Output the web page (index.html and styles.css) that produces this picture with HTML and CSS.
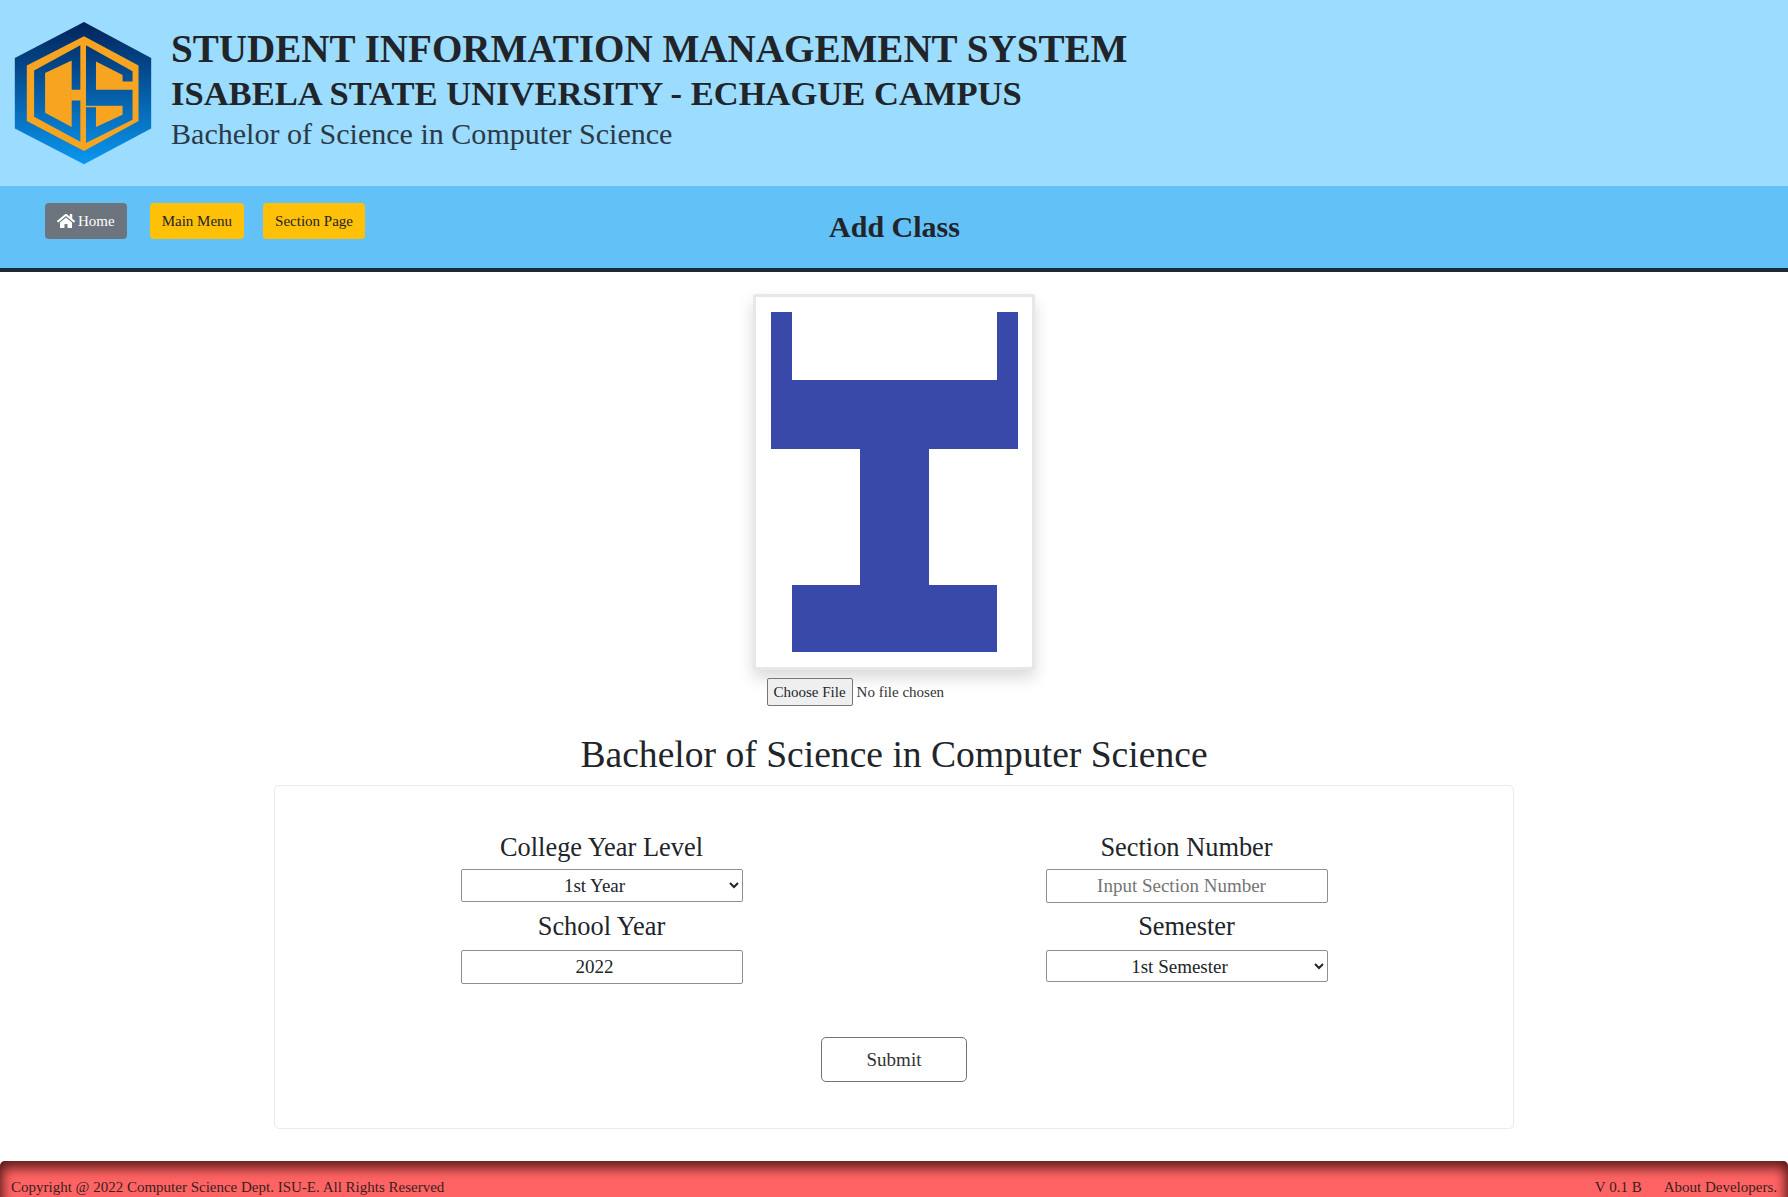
FILE: index.html
```html
<!DOCTYPE html>
<html lang="en">
<head>
<meta charset="utf-8">
<title>Add Class</title>
<link rel="stylesheet" href="styles.css">
</head>
<body>
<header class="banner">
  <svg class="logo" viewBox="12 12 414 430" aria-label="CS logo">
    <defs>
      <linearGradient id="inner" gradientUnits="userSpaceOnUse" x1="0" y1="12" x2="0" y2="440">
        <stop offset="0" stop-color="#02235a"/>
        <stop offset="1" stop-color="#0a97f0"/>
      </linearGradient>
    </defs>
    <path fill="url(#inner)" d="M222 12 424 120V332L222 440 14 332V120Z"/>
    <path fill="#f7a521" d="M222 55 386 143V310L222 400 50 310V143Z"/>
    <path fill="url(#inner)" d="M211 82 72 158V297L211 372V248H185V328L105 285V165L185 128V216H211Z"/>
    <path fill="url(#inner)" d="M228 82 368 160V191H338V171L258 131V216H368V306L228 376V268H258V328L338 291V264H228Z"/>
  </svg>
  <div class="titles">
    <h1 class="t-main">STUDENT INFORMATION MANAGEMENT SYSTEM</h1>
    <h2 class="t-uni">ISABELA STATE UNIVERSITY - ECHAGUE CAMPUS</h2>
    <p class="t-course">Bachelor of Science in Computer Science</p>
  </div>
</header>

<nav class="navbar">
  <div class="nav-btns">
    <a class="btn btn-grey">
      <svg class="home-ic" viewBox="0 0 576 512"><path fill="#fff" d="M280.400 148.300 96 300.100V464a16 16 0 0 0 16 16l112-.3a16 16 0 0 0 15.900-16V368a16 16 0 0 1 16-16h64a16 16 0 0 1 16 16v95.600a16 16 0 0 0 16 16.100l112 .3a16 16 0 0 0 16-16V300L295.700 148.300a12.200 12.200 0 0 0-15.300 0ZM571.600 251.500 488 182.600V44a12 12 0 0 0-12-12h-56a12 12 0 0 0-12 12v72.600L318.500 43a48 48 0 0 0-61 0L4.300 251.500a12 12 0 0 0-1.600 16.900l25.500 31A12 12 0 0 0 45.200 301l235.200-193.700a12.200 12.200 0 0 1 15.300 0L530.900 301a12 12 0 0 0 16.900-1.600l25.500-31a12 12 0 0 0-1.700-16.900Z"/></svg>
      Home
    </a>
    <a class="btn btn-yellow">Main Menu</a>
    <a class="btn btn-yellow">Section Page</a>
  </div>
  <div class="nav-title">Add Class</div>
  <div></div>
</nav>

<main class="content">
  <div class="photo">
    <svg class="photo-img" viewBox="0 0 247 340">
      <path fill="#3949a9" d="M0 0H21V68H226V0H247V137H158V273H226V340H21V273H89V137H0Z"/>
    </svg>
  </div>
  <input class="file" type="file">
  <h3 class="course">Bachelor of Science in Computer Science</h3>
  <form class="card">
    <div class="grid">
      <div class="col">
        <label class="lbl">College Year Level</label>
        <select class="field sel"><option>1st Year</option></select>
        <label class="lbl lbl2">School Year</label>
        <input class="field inp inp-y" type="text" value="2022">
      </div>
      <div class="col">
        <label class="lbl">Section Number</label>
        <input class="field inp" type="text" placeholder="Input Section Number">
        <label class="lbl lbl2b">Semester</label>
        <select class="field sel sel-s"><option>1st Semester</option></select>
      </div>
    </div>
    <button class="submit" type="button">Submit</button>
  </form>
</main>

<footer class="foot">
  <span>Copyright @ 2022 Computer Science Dept. ISU-E. All Rights Reserved</span>
  <span class="foot-right"><span>V 0.1 B</span><span>About Developers.</span></span>
</footer>
</body>
</html>
```
FILE: styles.css
```css
* { box-sizing: border-box; }
html, body { margin: 0; height: 1197px; overflow: hidden; }
body { font-family: "Liberation Serif", "Times New Roman", serif; color: #212529; background: #fff; }

.banner { height: 186px; background: #9bdcff; display: flex; align-items: flex-start; padding: 22px 0 0 14px; gap: 19px; }
.logo { width: 138px; height: 143px; flex: none; }
.titles { padding-top: 3px; }
.t-main { margin: 0; font-size: 39.1px; line-height: 48px; font-weight: 700; }
.t-uni { margin: 0; font-size: 34.55px; line-height: 41px; font-weight: 700; }
.t-course { margin: 0; font-size: 30.05px; line-height: 40px; color: #2b3a48; }

.navbar { height: 86px; background: #62c1f6; border-bottom: 4px solid #1d2b38; display: grid; grid-template-columns: 1fr auto 1fr; padding: 17px 0 0 45px; }
.nav-btns { display: flex; gap: 19px; align-items: flex-start; }
.btn { display: flex; align-items: center; height: 36px; padding: 0 12px; border-radius: 4px; font-size: 15px; white-space: nowrap; }
.btn-grey { background: #6c757d; color: #fff; gap: 3px; margin-right: 4px; }
.btn-yellow { background: #ffc107; color: #212529; }
.home-ic { width: 18px; height: 16px; }
.nav-title { font-size: 30px; font-weight: 700; line-height: 40px; padding-top: 4px; transform: translateX(-22px); }

.content { display: flex; flex-direction: column; align-items: center; padding-top: 22px; }
.photo { width: 282px; height: 376px; background: #fff; border: 3px solid #e6e7ea; border-radius: 3px; box-shadow: 0 8px 16px rgba(0,0,0,.15); padding: 15px 0 0 15px; }
.photo-img { width: 247px; height: 340px; display: block; }
.file { width: 255px; height: 28px; margin-top: 8px; font-family: inherit; font-size: 15px; color: #333; }
.file::file-selector-button { height: 28px; padding: 0 6px; margin-right: 4px; font-family: inherit; font-size: 15px; color: #212529; border: 1px solid #767676; border-radius: 2px; background: #efefef; }
.course { margin: 27px 0 0; font-size: 37.6px; line-height: 44px; font-weight: 400; }

.card { width: 1240px; height: 344px; margin-top: 8px; border: 1px solid #e9ebee; border-radius: 5px; padding: 43px 34px 0; display: flex; flex-direction: column; align-items: center; }
.grid { width: 100%; display: grid; grid-template-columns: 1fr 1fr; }
.col { display: flex; flex-direction: column; align-items: center; }
.lbl { font-size: 26.4px; line-height: 36px; height: 40px; }
.lbl2 { margin-top: 6px; height: 42px; }
.lbl2b { margin-top: 5px; height: 42px; }
.field { width: 282px; font-family: inherit; font-size: 19px; color: #212529; background: #fff; border: 1px solid #8f8f8f; border-radius: 2px; text-align: center; }
.sel { height: 33px; padding-right: 2px; }
.sel-s { height: 32px; }
.inp { height: 34px; padding: 1px 12px 1px 2px; }
.inp-y { padding-right: 16px; }
.inp::placeholder { color: #757575; }
.submit { width: 146px; height: 45px; margin-top: 53px; background: #fff; border: 1px solid #6c757d; border-radius: 5px; font-family: inherit; font-size: 19px; color: #333; }

.foot { margin-top: 32px; height: 70px; background: #ff6464; border-radius: 5px 5px 0 0; box-shadow: inset 0 0 14px rgba(50,10,10,.8), inset 0 8px 12px rgba(40,0,0,.5); padding: 16px 11px 0; display: flex; justify-content: space-between; font-size: 15px; line-height: 20px; color: #3a2020; }
.foot-right { display: flex; gap: 22px; }
```
